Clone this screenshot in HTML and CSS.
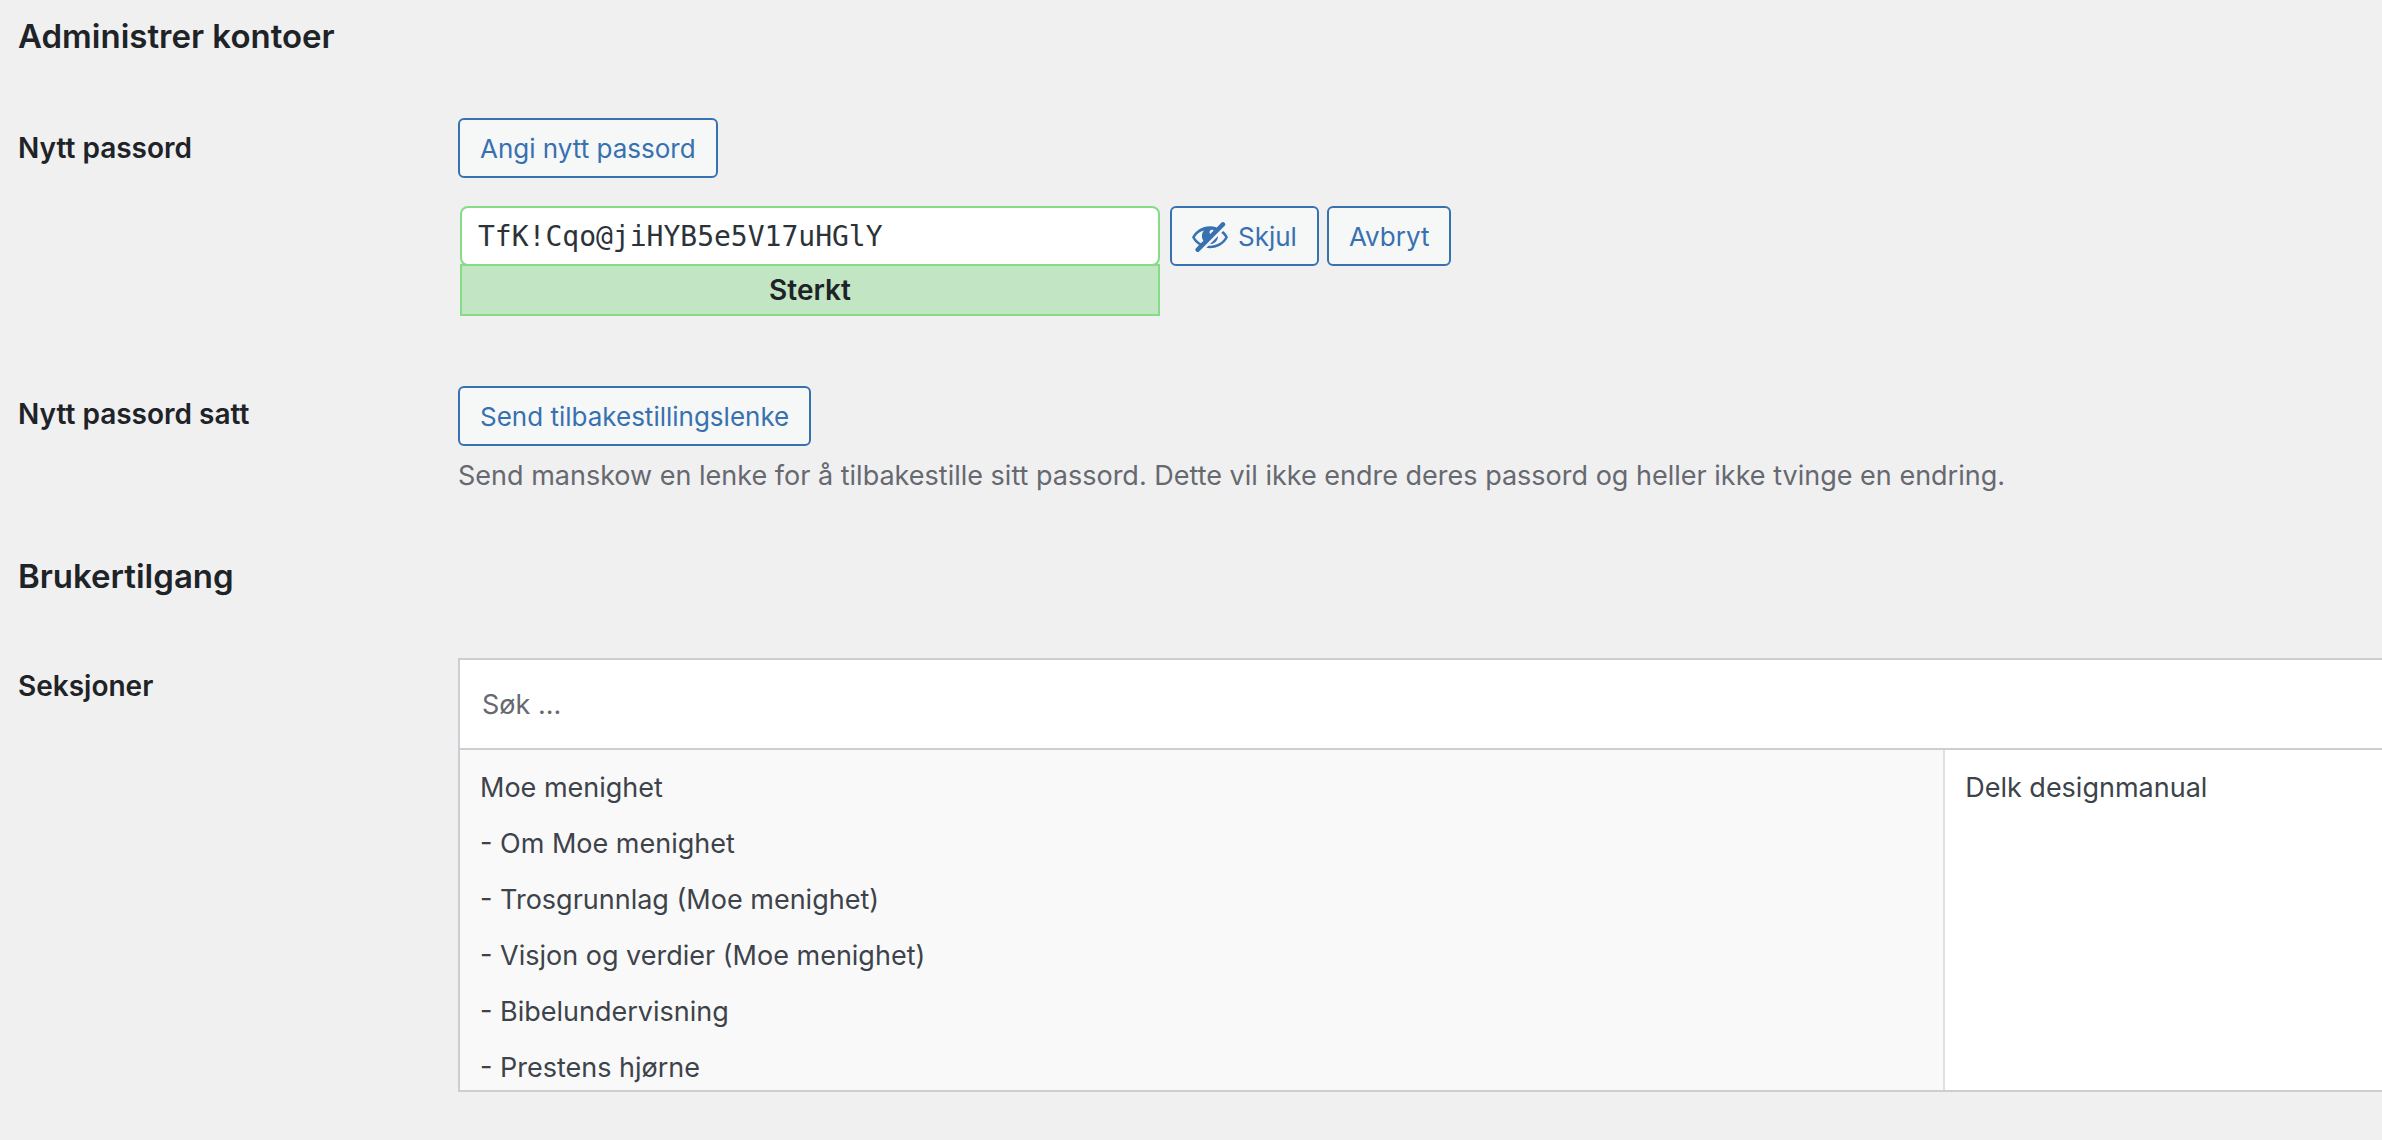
FILE: index.html
```html
<!DOCTYPE html>
<html lang="nb">
<head>
  <meta charset="UTF-8">
  <title>Rediger bruker</title>
  <link rel="stylesheet" href="styles.css">
</head>
<body>

  <form class="profile">
    <h2>Administrer kontoer</h2>

    <div class="form-row password-row">
      <label class="row-label" for="new-password">Nytt passord</label>
      <div class="field">
        <button type="button" class="button">Angi nytt passord</button>
        <div class="password-controls">
          <div class="password-box">
            <input type="text" id="new-password" class="password-input" value="TfK!Cqo@jiHYB5e5V17uHGlY" spellcheck="false">
            <div class="strength">Sterkt</div>
          </div>
          <button type="button" class="button hide-button">
            <svg class="icon" viewBox="0 0 20 20" aria-hidden="true">
              <path d="M17.2 3.3l.16.17c.39.39.39 1.02 0 1.41L4.55 17.7c-.39.39-1.03.39-1.41 0l-.17-.17c-.39-.39-.39-1.02 0-1.41l1.59-1.6c-1.57-1-2.76-2.3-3.56-3.93.81-1.65 2.03-2.98 3.64-3.99S8.04 5.09 10 5.09c1.2 0 2.33.21 3.4.6l2.38-2.39c.39-.39 1.03-.39 1.42 0zm-7.09 4.01c-.23.25-.34.54-.34.88 0 .31.12.58.31.81l1.8-1.79c-.13-.12-.28-.21-.45-.26-.11-.01-.28-.03-.49-.04-.33.03-.6.16-.83.4zM2.4 10.59c.69 1.23 1.71 2.25 3.05 3.05l1.28-1.28c-.51-.69-.77-1.47-.77-2.36 0-1.06.36-1.98 1.09-2.76-1.04.27-1.96.7-2.76 1.26-.8.58-1.43 1.27-1.89 2.09zm13.22-2.13l.96-.96c1.02.86 1.83 1.89 2.42 3.09-.81 1.65-2.03 2.98-3.64 3.99s-3.4 1.51-5.36 1.51c-.63 0-1.24-.07-1.83-.18l1.07-1.07c.25.02.5.05.76.05 1.63 0 3.13-.4 4.5-1.21s2.4-1.84 3.1-3.09c-.46-.82-1.09-1.51-1.89-2.09-.03-.01-.06-.03-.09-.04zm-5.58 5.58l4-4c-.01 1.1-.41 2.04-1.18 2.81-.78.78-1.72 1.18-2.82 1.19z"/>
            </svg>
            Skjul
          </button>
          <button type="button" class="button">Avbryt</button>
        </div>
      </div>
    </div>

    <div class="form-row reset-row">
      <label class="row-label" for="send-reset">Nytt passord satt</label>
      <div class="field">
        <button type="button" id="send-reset" class="button">Send tilbakestillingslenke</button>
        <p class="description">Send manskow en lenke for å tilbakestille sitt passord. Dette vil ikke endre deres passord og heller ikke tvinge en endring.</p>
      </div>
    </div>

    <h2>Brukertilgang</h2>

    <div class="form-row">
      <label class="row-label" for="section-search">Seksjoner</label>
      <div class="relationship">
        <input type="text" id="section-search" class="search" placeholder="Søk ...">
        <div class="selection">
          <ul class="list choices">
            <li>Moe menighet</li>
            <li>- Om Moe menighet</li>
            <li>- Trosgrunnlag (Moe menighet)</li>
            <li>- Visjon og verdier (Moe menighet)</li>
            <li>- Bibelundervisning</li>
            <li>- Prestens hjørne</li>
          </ul>
          <ul class="list values">
            <li>Delk designmanual</li>
          </ul>
        </div>
      </div>
    </div>
  </form>

</body>
</html>
```

FILE: styles.css
```css
:root {
  --bg: #f0f0f0;
  --heading: #1e2328;
  --text: #3d434a;
  --muted: #666970;
  --blue: #3871b0;
  --green: #86db86;
  --border: #cbcfd4;
}
* {
  box-sizing: border-box;
  margin: 0;
  padding: 0;
}
body {
  background: var(--bg);
  color: var(--text);
  font-family: Inter, "Liberation Sans", sans-serif;
  font-size: 27px;
  line-height: 40px;
}
.profile {
  padding: 16px 0 40px 18px;
}
h2 {
  color: var(--heading);
  font-size: 33px;
  font-weight: 600;
  line-height: 40px;
  margin-bottom: 62px;
}
.form-row {
  display: grid;
  grid-template-columns: 440px 1fr;
}
.row-label {
  color: var(--heading);
  font-size: 28px;
  font-weight: 600;
  padding-top: 8px;
}
.password-row {
  margin-bottom: 70px;
}
.password-row .row-label {
  padding-top: 10px;
}
.reset-row {
  margin-bottom: 60px;
}
.button {
  display: inline-flex;
  align-items: center;
  height: 60px;
  padding: 0 20px;
  border: 2px solid var(--blue);
  border-radius: 6px;
  background: #f6f7f7;
  color: var(--blue);
  font-family: inherit;
  font-size: 26px;
  cursor: pointer;
}
.hide-button {
  gap: 8px;
  padding-left: 18px;
}
.icon {
  width: 40px;
  height: 40px;
  fill: currentColor;
}
.password-controls {
  display: flex;
  align-items: flex-start;
  gap: 8px;
  margin-top: 28px;
}
.password-box {
  width: 704px;
  padding: 0 2px;
}
.password-input {
  display: block;
  width: 100%;
  height: 60px;
  padding: 0 16px;
  border: 2px solid var(--green);
  border-radius: 8px;
  background: #fff;
  color: #2c3338;
  font-family: "DejaVu Sans Mono", monospace;
  font-size: 28px;
}
.strength {
  margin-top: -2px;
  padding: 4px 10px;
  border: 2px solid var(--green);
  background: #c2e5c3;
  color: var(--heading);
  font-size: 28px;
  font-weight: 600;
  text-align: center;
}
.description {
  margin-top: 10px;
  color: var(--muted);
}
.relationship {
  border: 2px solid var(--border);
  border-right: 0;
  background: #fff;
}
.search {
  display: block;
  width: 100%;
  height: 90px;
  padding: 0 22px;
  border: 0;
  border-bottom: 2px solid var(--border);
  background: #fff;
  color: var(--text);
  font-family: inherit;
  font-size: 27px;
}
.search::placeholder {
  color: var(--muted);
}
.selection {
  display: grid;
  grid-template-columns: 17fr 5fr;
  height: 340px;
}
.list {
  overflow: hidden;
  padding-top: 10px;
  list-style: none;
}
.list li {
  padding: 8px 20px;
}
.choices {
  border-right: 2px solid #dfdfdf;
  background: #f9f9f9;
}
```
